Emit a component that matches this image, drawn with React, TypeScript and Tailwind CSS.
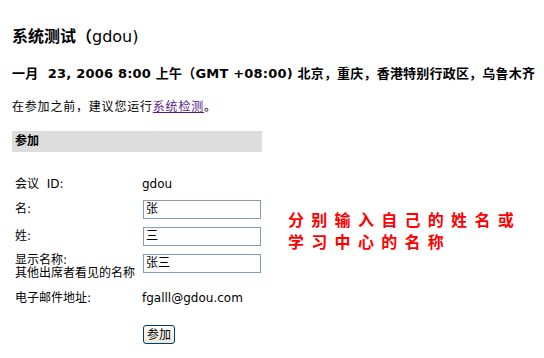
const font = "font-['DejaVu_Sans','Noto_Sans_CJK_SC',sans-serif]";

function Field({ value }: { value: string }) {
  return (
    <div className="w-[118px] h-[19px] border border-[#7f9db9] bg-white pl-[2px] text-[12px] leading-[17px] text-black">
      {value}
    </div>
  );
}

export default function App() {
  return (
    <div className={`${font} w-[544px] h-[358px] overflow-hidden bg-white text-black px-[12px]`}>
      <h1 className="pt-[27px] text-[16px] leading-[20px] font-bold whitespace-nowrap">
        系统测试（<span className="font-normal">gdou)</span>
      </h1>

      <div className="mt-[19px] text-[13px] leading-[16px] font-bold whitespace-nowrap tracking-[0.2px]">
        一月&nbsp; 23, 2006 8:00 上午（GMT +08:00) 北京，重庆，香港特别行政区，乌鲁木齐
      </div>

      <p className="mt-[17px] text-[12px] leading-[16px] whitespace-nowrap tracking-[0.8px]">
        在参加之前，建议您运行<a className="text-[#5a1a8b] underline">系统检测</a>。
      </p>

      <div className="mt-[16px] w-[250px] h-[21px] bg-[#dddddd] pl-[3px] text-[12px] leading-[21px] font-bold">
        参加
      </div>

      <div className="flex">
        {/* form */}
        <div className="pl-[3px] pt-[24px] text-[12px] flex flex-col">
          <div className="flex h-[16px] leading-[16px]">
            <span className="w-[127px]">会议&nbsp; ID:</span>
            <span>gdou</span>
          </div>
          <div className="flex mt-[8px] h-[19px] leading-[19px]">
            <span className="w-[128px]">名:</span>
            <Field value="张" />
          </div>
          <div className="flex mt-[8px] h-[19px] leading-[19px]">
            <span className="w-[128px]">姓:</span>
            <Field value="三" />
          </div>
          <div className="flex mt-[8px] h-[26px]">
            <span className="w-[128px] leading-[13px]">
              显示名称:
              <br />
              <span className="whitespace-nowrap">其他出席者看见的名称</span>
            </span>
            <Field value="张三" />
          </div>
          <div className="flex mt-[10px] h-[16px] leading-[16px]">
            <span className="w-[127px]">电子邮件地址:</span>
            <span>fgalll@gdou.com</span>
          </div>
          <div className="flex mt-[19px]">
            <span className="w-[128px]" />
            <button className="w-[32px] h-[19px] rounded-[3px] border border-[#003c74] bg-gradient-to-b from-white to-[#ece9d8] text-[12px] leading-[16px] text-black">
              参加
            </button>
          </div>
        </div>

        {/* annotation */}
        <div className="ml-[27px] mt-[58px] text-[16px] leading-[22px] font-bold text-[#ff0000] tracking-[7.3px] whitespace-nowrap">
          分别输入自己的姓名或
          <br />
          学习中心的名称
        </div>
      </div>
    </div>
  );
}
